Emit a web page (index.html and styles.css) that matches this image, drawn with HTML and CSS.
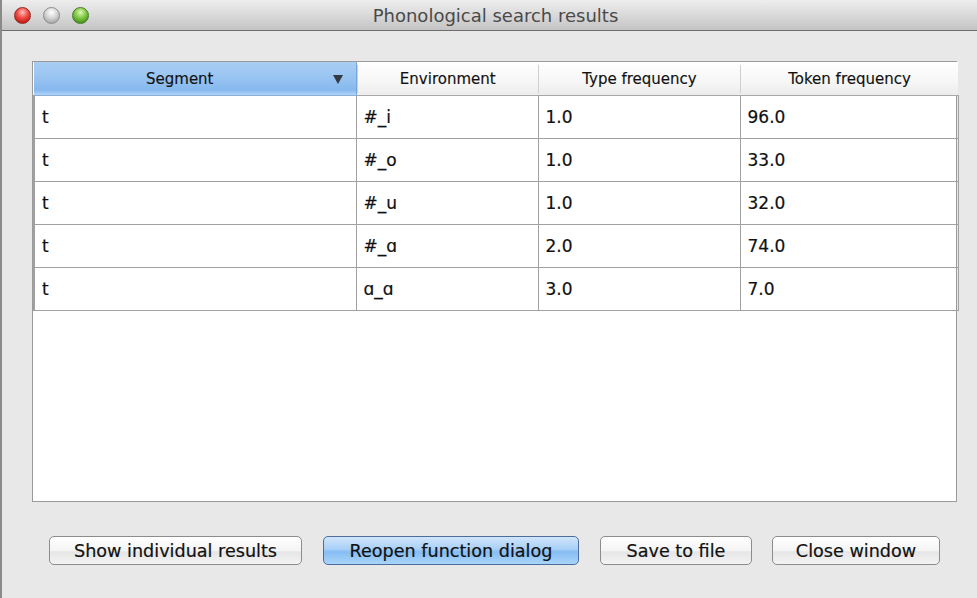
FILE: index.html
```html
<!DOCTYPE html>
<html>
<head>
<meta charset="utf-8">
<link rel="stylesheet" href="styles.css">
</head>
<body>
<div class="window">
  <div class="titlebar">
    <div class="lights">
      <span class="light red"></span>
      <span class="light gray"></span>
      <span class="light green"></span>
    </div>
    <div class="title">Phonological search results</div>
  </div>
  <div class="content">
    <div class="panel">
      <table class="grid">
        <colgroup>
          <col class="c1"><col class="c2"><col class="c3"><col class="c4">
        </colgroup>
        <thead>
          <tr>
            <th class="sorted"><span class="hlabel first">Segment</span><span class="arrow"></span></th>
            <th><span class="hlabel sep">Environment</span></th>
            <th><span class="hlabel sep">Type frequency</span></th>
            <th><span class="hlabel sep">Token frequency</span></th>
          </tr>
        </thead>
        <tbody>
          <tr><td>t</td><td>#_i</td><td>1.0</td><td>96.0</td></tr>
          <tr><td>t</td><td>#_o</td><td>1.0</td><td>33.0</td></tr>
          <tr><td>t</td><td>#_u</td><td>1.0</td><td>32.0</td></tr>
          <tr><td>t</td><td>#_ɑ</td><td>2.0</td><td>74.0</td></tr>
          <tr><td>t</td><td>ɑ_ɑ</td><td>3.0</td><td>7.0</td></tr>
        </tbody>
      </table>
    </div>
    <div class="buttons">
      <button class="btn w1">Show individual results</button>
      <button class="btn default w2">Reopen function dialog</button>
      <button class="btn w3">Save to file</button>
      <button class="btn w4">Close window</button>
    </div>
  </div>
</div>
</body>
</html>
```

FILE: styles.css
```css
html, body {
  margin: 0;
  padding: 0;
  background: #e8e8e8;
}
body {
  font-family: "DejaVu Sans", "Liberation Sans", sans-serif;
  color: #111;
}
.window {
  width: 977px;
  height: 598px;
  display: flex;
  flex-direction: column;
  background: #e8e8e8;
  border-left: 2px solid #8a8a8a;
  box-sizing: border-box;
}
.titlebar {
  height: 31px;
  flex: none;
  box-sizing: border-box;
  display: flex;
  align-items: center;
  background: linear-gradient(#ededed, #dadada 50%, #c3c3c3);
  border-bottom: 1px solid #6e6e6e;
  position: relative;
}
.lights {
  display: flex;
  gap: 12px;
  padding-left: 12px;
  padding-top: 1px;
}
.light {
  width: 17px;
  height: 17px;
  border-radius: 50%;
  box-sizing: border-box;
}
.red {
  background: radial-gradient(circle at 50% 30%, #ffc2bc 0%, #f2504a 40%, #c41a14 80%, #e05048 100%);
  border: 1px solid #8e2a26;
}
.gray {
  background: radial-gradient(circle at 50% 30%, #ffffff 0%, #d4d4d4 45%, #a8a8a8 80%, #cfcfcf 100%);
  border: 1px solid #8d8d8d;
}
.green {
  background: radial-gradient(circle at 50% 30%, #e0f8b8 0%, #86cc4a 40%, #45951a 80%, #74bb46 100%);
  border: 1px solid #4a7a2a;
}
.title {
  position: absolute;
  left: 0;
  right: 0;
  top: 0;
  bottom: 0;
  display: flex;
  align-items: center;
  justify-content: center;
  font-size: 18px;
  color: #4a4a4a;
  padding-left: 12px;
  pointer-events: none;
}
.content {
  flex: 1;
  padding: 30px 0 0 30px;
}
.panel {
  width: 925px;
  height: 441px;
  box-sizing: border-box;
  background: #fff;
  border: 1px solid #9a9a9a;
}
.grid {
  border-collapse: collapse;
  table-layout: fixed;
  width: 924px;
}
.c1 { width: 322px; }
.c2 { width: 182px; }
.c3 { width: 202px; }
.c4 { width: 218px; }
.grid th {
  height: 33px;
  padding: 0;
  font-weight: normal;
  font-size: 15px;
  -webkit-text-stroke: 0.15px #111;
  background: linear-gradient(#ffffff, #f6f6f6 60%, #ececec);
  border-bottom: 1px solid #a8a8a8;
  text-align: center;
  position: relative;
}
.grid th .sep {
  display: flex;
  align-items: center;
  justify-content: center;
  height: 28px;
  border-left: 1px solid #cfcfcf;
}
.grid th .first {
  display: block;
  padding-right: 30px;
}
.grid th.sorted {
  background: linear-gradient(#a9cdf3, #9cc6f2 40%, #86b8ee 85%, #b3d5f7);
  border-bottom: 1px solid #8aaed6;
  border-right: 1px solid #7aa6da;
}
.arrow {
  position: absolute;
  right: 13px;
  top: 13px;
  width: 0;
  height: 0;
  border-left: 5px solid transparent;
  border-right: 5px solid transparent;
  border-top: 9px solid #333a44;
}
.grid td {
  height: 42px;
  padding: 0 0 0 7px;
  font-size: 17px;
  -webkit-text-stroke: 0.2px #111;
  border: 1px solid #a0a0a0;
  border-top: none;
}
.grid td:first-child {
  border-left: 2px solid #a0a0a0;
}
.buttons {
  display: flex;
  gap: 21px;
  padding: 34px 0 0 17px;
}
.btn {
  height: 29px;
  box-sizing: border-box;
  font-family: "DejaVu Sans", "Liberation Sans", sans-serif;
  font-size: 17.6px;
  -webkit-text-stroke: 0.2px #111;
  color: #111;
  border: 1px solid #8c8c8c;
  border-radius: 5px;
  background: linear-gradient(#ffffff, #f4f4f4 50%, #e6e6e6 55%, #f3f3f3);
  padding: 0;
}
.btn.default {
  border-color: #4b6e9e;
  background: linear-gradient(#d0e5fb, #a8d0f7 45%, #86bdf3 55%, #aad5fa);
}
.w1 { width: 253px; }
.w2 { width: 256px; }
.w3 { width: 152px; }
.w4 { width: 168px; margin-left: -1px; }
```
